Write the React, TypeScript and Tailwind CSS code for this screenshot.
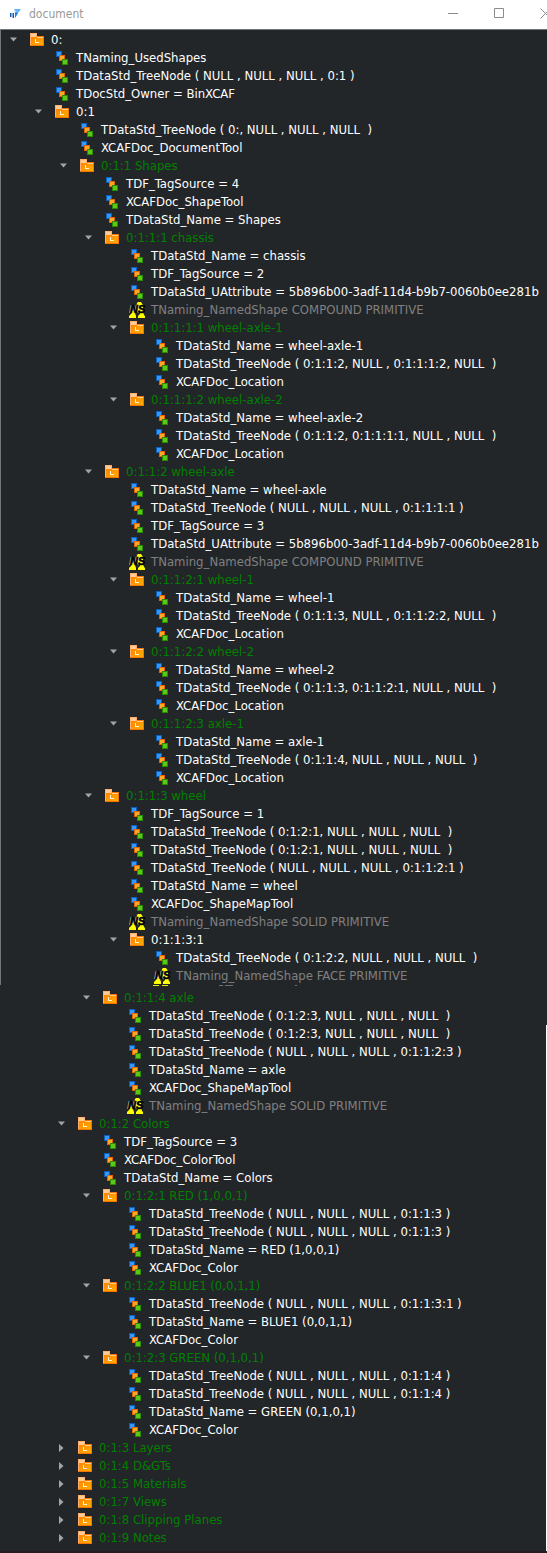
import { useState } from "react";

type Kind = "open" | "closed" | "attr" | "shape";
type Row = { depth: number; kind: Kind; text: string; plain?: boolean };

const folder = (depth: number, text: string, plain = false): Row => ({ depth, kind: "open", text, plain });
const closed = (depth: number, text: string): Row => ({ depth, kind: "closed", text });
const attr = (depth: number, text: string): Row => ({ depth, kind: "attr", text });
const shape = (depth: number, text: string): Row => ({ depth, kind: "shape", text });

const upperRows: Row[] = [
  folder(0, "0:", true),
  attr(1, "TNaming_UsedShapes"),
  attr(1, "TDataStd_TreeNode ( NULL , NULL , NULL , 0:1 )"),
  attr(1, "TDocStd_Owner = BinXCAF"),
  folder(1, "0:1", true),
  attr(2, "TDataStd_TreeNode ( 0:, NULL , NULL , NULL  )"),
  attr(2, "XCAFDoc_DocumentTool"),
  folder(2, "0:1:1 Shapes"),
  attr(3, "TDF_TagSource = 4"),
  attr(3, "XCAFDoc_ShapeTool"),
  attr(3, "TDataStd_Name = Shapes"),
  folder(3, "0:1:1:1 chassis"),
  attr(4, "TDataStd_Name = chassis"),
  attr(4, "TDF_TagSource = 2"),
  attr(4, "TDataStd_UAttribute = 5b896b00-3adf-11d4-b9b7-0060b0ee281b"),
  shape(4, "TNaming_NamedShape COMPOUND PRIMITIVE"),
  folder(4, "0:1:1:1:1 wheel-axle-1"),
  attr(5, "TDataStd_Name = wheel-axle-1"),
  attr(5, "TDataStd_TreeNode ( 0:1:1:2, NULL , 0:1:1:1:2, NULL  )"),
  attr(5, "XCAFDoc_Location"),
  folder(4, "0:1:1:1:2 wheel-axle-2"),
  attr(5, "TDataStd_Name = wheel-axle-2"),
  attr(5, "TDataStd_TreeNode ( 0:1:1:2, 0:1:1:1:1, NULL , NULL  )"),
  attr(5, "XCAFDoc_Location"),
  folder(3, "0:1:1:2 wheel-axle"),
  attr(4, "TDataStd_Name = wheel-axle"),
  attr(4, "TDataStd_TreeNode ( NULL , NULL , NULL , 0:1:1:1:1 )"),
  attr(4, "TDF_TagSource = 3"),
  attr(4, "TDataStd_UAttribute = 5b896b00-3adf-11d4-b9b7-0060b0ee281b"),
  shape(4, "TNaming_NamedShape COMPOUND PRIMITIVE"),
  folder(4, "0:1:1:2:1 wheel-1"),
  attr(5, "TDataStd_Name = wheel-1"),
  attr(5, "TDataStd_TreeNode ( 0:1:1:3, NULL , 0:1:1:2:2, NULL  )"),
  attr(5, "XCAFDoc_Location"),
  folder(4, "0:1:1:2:2 wheel-2"),
  attr(5, "TDataStd_Name = wheel-2"),
  attr(5, "TDataStd_TreeNode ( 0:1:1:3, 0:1:1:2:1, NULL , NULL  )"),
  attr(5, "XCAFDoc_Location"),
  folder(4, "0:1:1:2:3 axle-1"),
  attr(5, "TDataStd_Name = axle-1"),
  attr(5, "TDataStd_TreeNode ( 0:1:1:4, NULL , NULL , NULL  )"),
  attr(5, "XCAFDoc_Location"),
  folder(3, "0:1:1:3 wheel"),
  attr(4, "TDF_TagSource = 1"),
  attr(4, "TDataStd_TreeNode ( 0:1:2:1, NULL , NULL , NULL  )"),
  attr(4, "TDataStd_TreeNode ( 0:1:2:1, NULL , NULL , NULL  )"),
  attr(4, "TDataStd_TreeNode ( NULL , NULL , NULL , 0:1:1:2:1 )"),
  attr(4, "TDataStd_Name = wheel"),
  attr(4, "XCAFDoc_ShapeMapTool"),
  shape(4, "TNaming_NamedShape SOLID PRIMITIVE"),
  folder(4, "0:1:1:3:1", true),
  attr(5, "TDataStd_TreeNode ( 0:1:2:2, NULL , NULL , NULL  )"),
  shape(5, "TNaming_NamedShape FACE PRIMITIVE"),
];

const axleRows: Row[] = [
  folder(3, "0:1:1:4 axle"),
  attr(4, "TDataStd_TreeNode ( 0:1:2:3, NULL , NULL , NULL  )"),
];

const lowerRows: Row[] = [
  attr(4, "TDataStd_TreeNode ( 0:1:2:3, NULL , NULL , NULL  )"),
  attr(4, "TDataStd_TreeNode ( NULL , NULL , NULL , 0:1:1:2:3 )"),
  attr(4, "TDataStd_Name = axle"),
  attr(4, "XCAFDoc_ShapeMapTool"),
  shape(4, "TNaming_NamedShape SOLID PRIMITIVE"),
  folder(2, "0:1:2 Colors"),
  attr(3, "TDF_TagSource = 3"),
  attr(3, "XCAFDoc_ColorTool"),
  attr(3, "TDataStd_Name = Colors"),
  folder(3, "0:1:2:1 RED (1,0,0,1)"),
  attr(4, "TDataStd_TreeNode ( NULL , NULL , NULL , 0:1:1:3 )"),
  attr(4, "TDataStd_TreeNode ( NULL , NULL , NULL , 0:1:1:3 )"),
  attr(4, "TDataStd_Name = RED (1,0,0,1)"),
  attr(4, "XCAFDoc_Color"),
  folder(3, "0:1:2:2 BLUE1 (0,0,1,1)"),
  attr(4, "TDataStd_TreeNode ( NULL , NULL , NULL , 0:1:1:3:1 )"),
  attr(4, "TDataStd_Name = BLUE1 (0,0,1,1)"),
  attr(4, "XCAFDoc_Color"),
  folder(3, "0:1:2:3 GREEN (0,1,0,1)"),
  attr(4, "TDataStd_TreeNode ( NULL , NULL , NULL , 0:1:1:4 )"),
  attr(4, "TDataStd_TreeNode ( NULL , NULL , NULL , 0:1:1:4 )"),
  attr(4, "TDataStd_Name = GREEN (0,1,0,1)"),
  attr(4, "XCAFDoc_Color"),
  closed(2, "0:1:3 Layers"),
  closed(2, "0:1:4 D&GTs"),
  closed(2, "0:1:5 Materials"),
  closed(2, "0:1:7 Views"),
  closed(2, "0:1:8 Clipping Planes"),
  closed(2, "0:1:9 Notes"),
];

const indent = ["pl-0", "pl-[25px]", "pl-[50px]", "pl-[75px]", "pl-[100px]", "pl-[125px]"];

function FolderIcon() {
  return (
    <svg width="15" height="14" viewBox="0 0 15 14" shapeRendering="crispEdges" className="shrink-0" aria-hidden="true">
      <defs>
        <linearGradient id="folderFill" x1="0" y1="0" x2="1" y2="1">
          <stop offset="0" stopColor="#ff8400" />
          <stop offset="1" stopColor="#ffae00" />
        </linearGradient>
      </defs>
      <path d="M0 0h7v3h7v10H0z" fill="#f57400" />
      <path d="M0 0h7v4H1v8H0z" fill="#fdb070" />
      <path d="M1 1h5v3H1z" fill="#ffcb96" />
      <path d="M7 4h6v1H7z" fill="#ffd08a" />
      <path d="M1 4h6v1h6v7H1z" fill="url(#folderFill)" />
      <path d="M5 6h1v3h3v1H5z" fill="#fff3d6" />
    </svg>
  );
}

function AttrIcon() {
  return (
    <svg width="13" height="14" viewBox="0 0 13 14" shapeRendering="crispEdges" className="shrink-0" aria-hidden="true">
      <path d="M0 0h6v6H0z" fill="#0a5fb8" />
      <path d="M1 1h4v4H1z" fill="#3399ff" />
      <path d="M3 4h6v6H3z" fill="#e06500" />
      <path d="M4 5h4v4H4z" fill="#ffa62b" />
      <path d="M6 8h6v6H6z" fill="#2c8a00" />
      <path d="M7 9h4v4H7z" fill="#5cc81a" />
    </svg>
  );
}

function ShapeIcon() {
  return (
    <svg width="17" height="17" viewBox="0 0 17 17" className="shrink-0" aria-hidden="true">
      <path
        d="M9 0h3l2 3v7l1 3 1 1v2h-7v-2l2-2v-2H9l-3 1 1 3v2H0v-2l2-2 1-3 4-3 1-5z"
        fill="#ffff00"
      />
      <g fontSize="11" fontWeight="bold" fontStyle="italic" fontFamily="Liberation Sans, sans-serif">
        <text x="0" y="11" fill="#b8b8b8">NS</text>
        <text x="1" y="11" fill="#000000" stroke="#000000" strokeWidth="0.5">NS</text>
      </g>
    </svg>
  );
}

function Arrow({ open }: { open: boolean }) {
  return (
    <svg width="7" height="8" viewBox="0 0 7 8" className="shrink-0" aria-hidden="true">
      <path d={open ? "M0 1.5h7L3.5 5.5z" : "M1 0v8L5.5 4z"} fill="#a3a4a5" />
    </svg>
  );
}

function TreeRow({ row }: { row: Row }) {
  const isFolder = row.kind === "open" || row.kind === "closed";
  const [open, setOpen] = useState(row.kind === "open");
  const color =
    row.kind === "shape" ? "text-[#808080]" : isFolder && !row.plain ? "text-[#008000]" : "text-white";

  return (
    <li
      role="treeitem"
      aria-level={row.depth + 1}
      aria-expanded={isFolder ? open : undefined}
      className={`flex h-[18px] items-center ${indent[row.depth]}`}
    >
      {isFolder ? (
        <button
          type="button"
          aria-label={`Toggle ${row.text}`}
          onClick={() => setOpen(!open)}
          className="flex h-[18px] w-5 shrink-0 items-center"
        >
          <Arrow open={open} />
        </button>
      ) : (
        <span className="w-5 shrink-0" />
      )}
      <span className="mr-1.5 flex w-[15px] shrink-0 items-center justify-center">
        {isFolder ? <FolderIcon /> : row.kind === "attr" ? <AttrIcon /> : <ShapeIcon />}
      </span>
      <span className={`whitespace-pre ${color}`}>{row.text}</span>
    </li>
  );
}

function Tree({ rows, label, className }: { rows: Row[]; label: string; className: string }) {
  return (
    <ul role="tree" aria-label={label} className={className}>
      {rows.map((row, i) => (
        <TreeRow key={i} row={row} />
      ))}
    </ul>
  );
}

function Logo() {
  return (
    <svg width="12" height="10" viewBox="0 0 12 10" className="shrink-0" aria-hidden="true">
      <path d="M4 0h7L8 4H7z" fill="#5fb4f5" />
      <path d="M4 0l4 4-3 5V6z" fill="#a5d6fb" />
      <path d="M8 4L5 9V4l1-1z" fill="#1f7fe0" />
      <path d="M0 4h1.5v4H0zM2.5 4H4v5H2.5z" fill="#0f5cb8" />
    </svg>
  );
}

export default function App() {
  const control = "flex w-[46px] items-center justify-center text-[#8b8b8b]";
  return (
    <div className="min-h-screen overflow-hidden bg-[#232629] font-['DejaVu_Sans_Condensed','DejaVu_Sans',sans-serif] text-[13px] leading-[18px]">
      <header className="flex h-[29px] overflow-hidden bg-white pl-[10px]">
        <div className="flex flex-1 items-center gap-[7px] pb-[2px]">
          <Logo />
          <h1 className="text-xs text-[#999999]">document</h1>
        </div>
        <div className="-mr-[21px] flex shrink-0 pb-[2px]">
          <button type="button" aria-label="Minimize" className={control}>
            <svg width="11" height="11" viewBox="0 0 11 11" aria-hidden="true">
              <path d="M0 5.5h10" stroke="currentColor" />
            </svg>
          </button>
          <button type="button" aria-label="Maximize" className={control}>
            <svg width="11" height="11" viewBox="0 0 11 11" aria-hidden="true">
              <path d="M.5.5h9v9h-9z" fill="none" stroke="currentColor" />
            </svg>
          </button>
          <button type="button" aria-label="Close" className={control}>
            <svg width="11" height="11" viewBox="0 0 11 11" aria-hidden="true">
              <path d="M.5.5l10 10M10.5.5l-10 10" stroke="currentColor" />
            </svg>
          </button>
        </div>
      </header>
      <main>
        <Tree rows={upperRows} label="Document" className="border-t border-l border-[#727878] pt-px pl-[9px]" />
        <svg width="300" height="4" viewBox="0 0 300 4" className="block" aria-hidden="true">
          <path d="M153 0h6v1h-6zM162 0h6v1h-6z" fill="#e8e800" />
          <path d="M219 0h4v1h-4zM225 0h8v1h-8zM295 0h2v1h-2z" fill="#707070" />
        </svg>
        <Tree rows={axleRows} label="Axle" className="pl-2" />
        <Tree rows={lowerRows} label="Document contents" className="border-r border-white pb-1 pl-2" />
        <div className="h-[2px] bg-[#271c22]" />
      </main>
    </div>
  );
}
